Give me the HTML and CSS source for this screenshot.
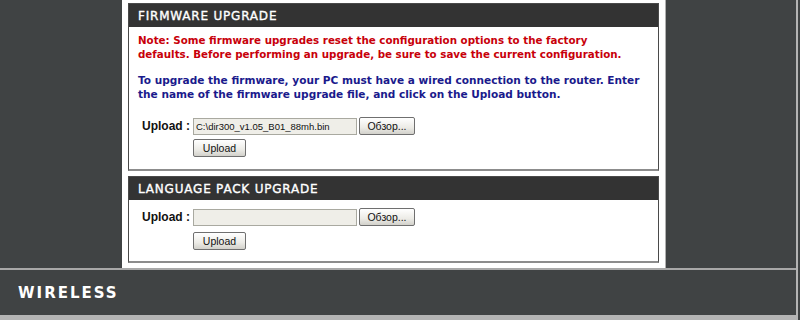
FILE: index.html
```html
<!DOCTYPE html>
<html lang="en">
<head>
    <meta charset="UTF-8">
    <meta name="viewport" content="width=device-width, initial-scale=1.0">
    <title>Firmware Upgrade</title>
    <link rel="stylesheet" href="styles.css">
</head>
<body>
    <div class="page">
        <div class="main-row">
            <div class="sidebar-left"></div>

            <div class="content">
                <div class="box">
                    <h2 class="box-title">FIRMWARE UPGRADE</h2>
                    <div class="box-body firmware-body">
                        <p class="note">Note: Some firmware upgrades reset the configuration options to the factory<br>defaults. Before performing an upgrade, be sure to save the current configuration.</p>
                        <p class="info">To upgrade the firmware, your PC must have a wired connection to the router. Enter<br>the name of the firmware upgrade file, and click on the Upload button.</p>

                        <div class="upload-row">
                            <label class="upload-label" for="fw-file">Upload :</label>
                            <input class="file-path" id="fw-file" type="text" value="C:\dir300_v1.05_B01_88mh.bin">
                            <button class="btn btn-browse">Обзор...</button>
                        </div>
                        <button class="btn btn-upload">Upload</button>
                    </div>
                </div>

                <div class="box">
                    <h2 class="box-title">LANGUAGE PACK UPGRADE</h2>
                    <div class="box-body lang-body">
                        <div class="upload-row">
                            <label class="upload-label" for="lang-file">Upload :</label>
                            <input class="file-path" id="lang-file" type="text" value="">
                            <button class="btn btn-browse">Обзор...</button>
                        </div>
                        <button class="btn btn-upload lang-upload">Upload</button>
                    </div>
                </div>
            </div>

            <div class="sidebar-right"></div>
        </div>

        <div class="footer">
            <span class="footer-logo">WIRELESS</span>
        </div>
    </div>
</body>
</html>
```

FILE: styles.css
```css
body {
    margin: 0;
    padding: 0;
    background-color: #404344;
    font-family: "DejaVu Sans", Verdana, sans-serif;
}

.page {
    width: 796px;
    height: 320px;
    border-right: 2px solid #b4b4b4;
}

.main-row {
    display: flex;
    height: 268px;
}

.sidebar-left {
    width: 122px;
    background-color: #404344;
}

.content {
    width: 531px;
    padding: 3px 6px 0 6px;
    background-color: #fff;
    display: flex;
    flex-direction: column;
    gap: 5px;
}

.sidebar-right {
    flex: 1;
    background-color: #404344;
    border-left: 1px solid #b0b0b0;
}

.box {
    border: 1px solid #4a4a4a;
    border-bottom: 2px solid #8c8c8c;
    background-color: #fff;
}

.box-title {
    margin: 0;
    height: 23px;
    line-height: 24px;
    padding-left: 9px;
    background-color: #333;
    color: #fff;
    font-size: 12px;
    font-weight: normal;
    letter-spacing: 0.8px;
    -webkit-text-stroke: 0.35px #fff;
}

.box-body {
    padding: 0 9px;
    font-size: 10.3px;
    font-weight: bold;
}

.firmware-body {
    height: 136px;
    padding-top: 6px;
}

.lang-body {
    height: 53px;
    padding-top: 8px;
}

.box-body p {
    margin: 0 0 12px 0;
    line-height: 14px;
    white-space: nowrap;
}

.note {
    color: #c8000a;
}

.info {
    color: #1a1a8c;
    font-size: 10.55px;
}

.upload-row {
    display: flex;
    align-items: center;
    padding-left: 4px;
    margin-top: 16px;
}

.lang-body .upload-row {
    margin-top: 0;
}

.upload-label {
    width: 51px;
    font-family: "Liberation Sans", Arial, sans-serif;
    font-size: 12px;
    font-weight: bold;
    color: #111;
}

.file-path {
    box-sizing: border-box;
    width: 164px;
    height: 17px;
    margin: 0 2px 0 0;
    padding: 0 2px;
    border: 1px solid #a9a9a0;
    background-color: #efeee8;
    font-family: "Liberation Sans", Arial, sans-serif;
    font-size: 9.5px;
    color: #111;
}

.btn {
    box-sizing: border-box;
    border: 1px solid #6f6f6f;
    border-radius: 2px;
    background: linear-gradient(#ffffff, #ecebe6 60%, #d2d1cb);
    font-family: "Liberation Sans", Arial, sans-serif;
    font-size: 10.5px;
    color: #111;
    padding: 0;
}

.btn-browse {
    width: 56px;
    height: 18px;
}

.btn-upload {
    display: block;
    width: 53px;
    height: 18px;
    margin: 4px 0 0 55px;
}

.lang-upload {
    margin-top: 6px;
}

.footer {
    height: 45px;
    border-top: 2px solid #a8a8a8;
    border-bottom: 5px solid #b4b4b4;
    background-color: #404344;
    display: flex;
    align-items: center;
    padding-left: 18px;
}

.footer-logo {
    color: #fff;
    font-family: "DejaVu Sans", Verdana, sans-serif;
    font-size: 15px;
    font-weight: bold;
    letter-spacing: 2px;
}
```
